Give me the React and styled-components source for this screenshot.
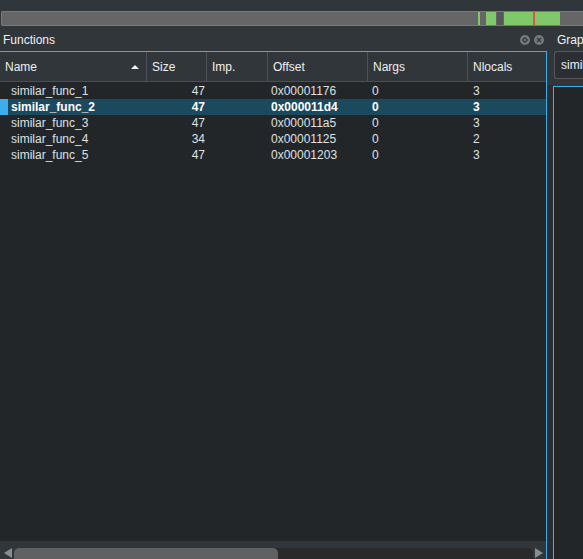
import React from 'react';
import styled, { createGlobalStyle } from 'styled-components';

const GlobalStyle = createGlobalStyle`
  html, body {
    margin: 0;
    padding: 0;
    background: #31363b;
    overflow: hidden;
  }
  body {
    font-family: "Liberation Sans", Arial, sans-serif;
    font-size: 12px;
    color: #eff0f1;
  }
`;

const functions = [
  { name: 'similar_func_1', size: 47, offset: '0x00001176', nargs: 0, nlocals: 3 },
  { name: 'similar_func_2', size: 47, offset: '0x000011d4', nargs: 0, nlocals: 3, selected: true },
  { name: 'similar_func_3', size: 47, offset: '0x000011a5', nargs: 0, nlocals: 3 },
  { name: 'similar_func_4', size: 34, offset: '0x00001125', nargs: 0, nlocals: 2 },
  { name: 'similar_func_5', size: 47, offset: '0x00001203', nargs: 0, nlocals: 3 },
];

// overview bar blocks: [left, width, colour]
const overviewBlocks = [
  [478, 2, '#7fc96a'],
  [486, 10, '#7fc96a'],
  [497, 6, '#555759'],
  [504, 29, '#7fc96a'],
  [533, 2, '#e0524f'],
  [535, 25, '#7fc96a'],
];

const Page = styled.div`
  height: 559px;
  display: flex;
  flex-direction: column;
`;

const Overview = styled.div`
  margin: 11px 0 0 1px;
  height: 13px;
  position: relative;
  background: #666666;
  border: 1px solid #777a7c;
  border-right: none;
  border-radius: 2px 0 0 2px;
`;

const OverviewBlock = styled.div`
  position: absolute;
  top: 0;
  bottom: 0;
`;

const Docks = styled.div`
  flex: 1;
  display: flex;
  margin-top: 5px;
  min-height: 0;
`;

const Dock = styled.div`
  display: flex;
  flex-direction: column;
  width: ${({ w }) => w};
  flex: ${({ grow }) => (grow ? 1 : 'none')};
  min-width: 0;
`;

const DockTitle = styled.div`
  height: 18px;
  padding: 0 3px 2px ${({ left }) => left}px;
  display: flex;
  align-items: center;
  white-space: nowrap;
  overflow: hidden;
  color: #eff0f1;
  font-size: 12px;
`;

const TitleText = styled.span`
  flex: 1;
`;

const DockButton = styled.span`
  width: 10px;
  height: 10px;
  border-radius: 50%;
  background: #75797d;
  margin-left: 4px;
  display: flex;
  align-items: center;
  justify-content: center;
`;

const TableFrame = styled.div`
  flex: 1;
  display: flex;
  flex-direction: column;
  border-top: 1px solid #3daee9;
  border-right: 1px solid #3daee9;
  background: #232629;
  min-height: 0;
`;

const cols = '147px 60px 61px 100px 100px 1fr';

const HeaderRow = styled.div`
  display: grid;
  grid-template-columns: ${cols};
  height: 29px;
  background: #31363b;
  border-bottom: 1px solid #4a4f54;
`;

const HeaderCell = styled.div`
  display: flex;
  align-items: center;
  padding-left: 5px;
  padding-right: 7px;
  border-right: ${({ last }) => (last ? 'none' : '1px solid #4d5257')};
  color: #eff0f1;
  font-size: 12px;
`;

const SortArrow = styled.span`
  margin-left: auto;
  width: 0;
  height: 0;
  border-left: 4px solid transparent;
  border-right: 4px solid transparent;
  border-bottom: 4px solid #eff0f1;
`;

const Body = styled.div`
  flex: 1;
  padding-top: 1px;
`;

const Row = styled.div`
  display: grid;
  grid-template-columns: ${cols};
  height: 16px;
  position: relative;
  background: ${({ selected }) => (selected ? '#1b4a5f' : 'transparent')};
  font-weight: ${({ selected }) => (selected ? 'bold' : 'normal')};
  color: ${({ selected }) => (selected ? '#ffffff' : '#dfe1e2')};
`;

const RowMarker = styled.span`
  position: absolute;
  left: 0;
  top: 0;
  bottom: 0;
  width: 8px;
  background: #3daee9;
`;

const Cell = styled.div`
  display: flex;
  align-items: center;
  white-space: nowrap;
  padding-left: ${({ pl }) => pl ?? 4}px;
  padding-right: ${({ pr }) => pr ?? 0}px;
  justify-content: ${({ right }) => (right ? 'flex-end' : 'flex-start')};
`;

const HScroll = styled.div`
  height: 18px;
  background: #31363b;
  display: flex;
  align-items: flex-end;
  padding: 0 3px 0 4px;
  gap: 2px;
`;

const ScrollArrow = styled.span`
  width: 0;
  height: 0;
  margin-bottom: 1px;
  border-top: 5px solid transparent;
  border-bottom: 5px solid transparent;
  ${({ dir }) =>
    dir === 'left'
      ? 'border-right: 8px solid #8a8d90;'
      : 'border-left: 8px solid #8a8d90;'}
`;

const ScrollTrack = styled.div`
  flex: 1;
  height: 11px;
  background: #2a2a2b;
  border-radius: 5px 5px 0 0;
  display: flex;
`;

const ScrollHandle = styled.div`
  width: 264px;
  background: #606162;
  border-radius: 5px 5px 0 0;
`;

const Gap = styled.div`
  width: 6px;
  flex: none;
  display: flex;
  flex-direction: column;
`;

const GapTop = styled.div`
  height: 54px;
  background: #31363b;
`;

const GapBottom = styled.div`
  flex: 1;
  background: #2a2e32;
`;

const Combo = styled.div`
  height: 26px;
  margin: 0 0 7px 1px;
  border: 1px solid #55595e;
  border-right: none;
  border-radius: 3px 0 0 3px;
  background: #2b2f33;
  display: flex;
  align-items: center;
  padding-left: 6px;
  white-space: nowrap;
  overflow: hidden;
`;

const GraphView = styled.div`
  flex: 1;
  border: 1px solid #3daee9;
  border-right: none;
  border-bottom: none;
  background: #232629;
`;

const CrossIcon = () => (
  <svg width="6" height="6" viewBox="0 0 6 6">
    <path d="M1 1 L5 5 M5 1 L1 5" stroke="#31363b" strokeWidth="1.3" />
  </svg>
);

const FloatIcon = () => (
  <svg width="6" height="6" viewBox="0 0 6 6">
    <path d="M3 0.6 L5.4 3 L3 5.4 L0.6 3 Z" fill="none" stroke="#31363b" strokeWidth="1.1" />
  </svg>
);

const App = () => {
  return (
    <Page>
      <GlobalStyle />
      <Overview>
        {overviewBlocks.map(([left, width, color], i) => (
          <OverviewBlock key={i} style={{ left: left - 2, width, background: color }} />
        ))}
      </Overview>
      <Docks>
        <Dock w="547px">
          <DockTitle left={3}>
            <TitleText>Functions</TitleText>
            <DockButton><FloatIcon /></DockButton>
            <DockButton><CrossIcon /></DockButton>
          </DockTitle>
          <TableFrame>
            <HeaderRow>
              <HeaderCell>Name<SortArrow /></HeaderCell>
              <HeaderCell>Size</HeaderCell>
              <HeaderCell>Imp.</HeaderCell>
              <HeaderCell>Offset</HeaderCell>
              <HeaderCell>Nargs</HeaderCell>
              <HeaderCell last>Nlocals</HeaderCell>
            </HeaderRow>
            <Body>
              {functions.map((f) => (
                <Row key={f.name} selected={f.selected}>
                  {f.selected && <RowMarker />}
                  <Cell pl={11}>{f.name}</Cell>
                  <Cell right pr={2}>{f.size}</Cell>
                  <Cell />
                  <Cell pl={3}>{f.offset}</Cell>
                  <Cell pl={4}>{f.nargs}</Cell>
                  <Cell pl={5}>{f.nlocals}</Cell>
                </Row>
              ))}
            </Body>
            <HScroll>
              <ScrollArrow dir="left" />
              <ScrollTrack>
                <ScrollHandle />
              </ScrollTrack>
              <ScrollArrow dir="right" />
            </HScroll>
          </TableFrame>
        </Dock>
        <Gap>
          <GapTop />
          <GapBottom />
        </Gap>
        <Dock grow>
          <DockTitle left={4}>
            <TitleText>Graph</TitleText>
          </DockTitle>
          <Combo>similar_func_2</Combo>
          <GraphView />
        </Dock>
      </Docks>
    </Page>
  );
};

export default App;
